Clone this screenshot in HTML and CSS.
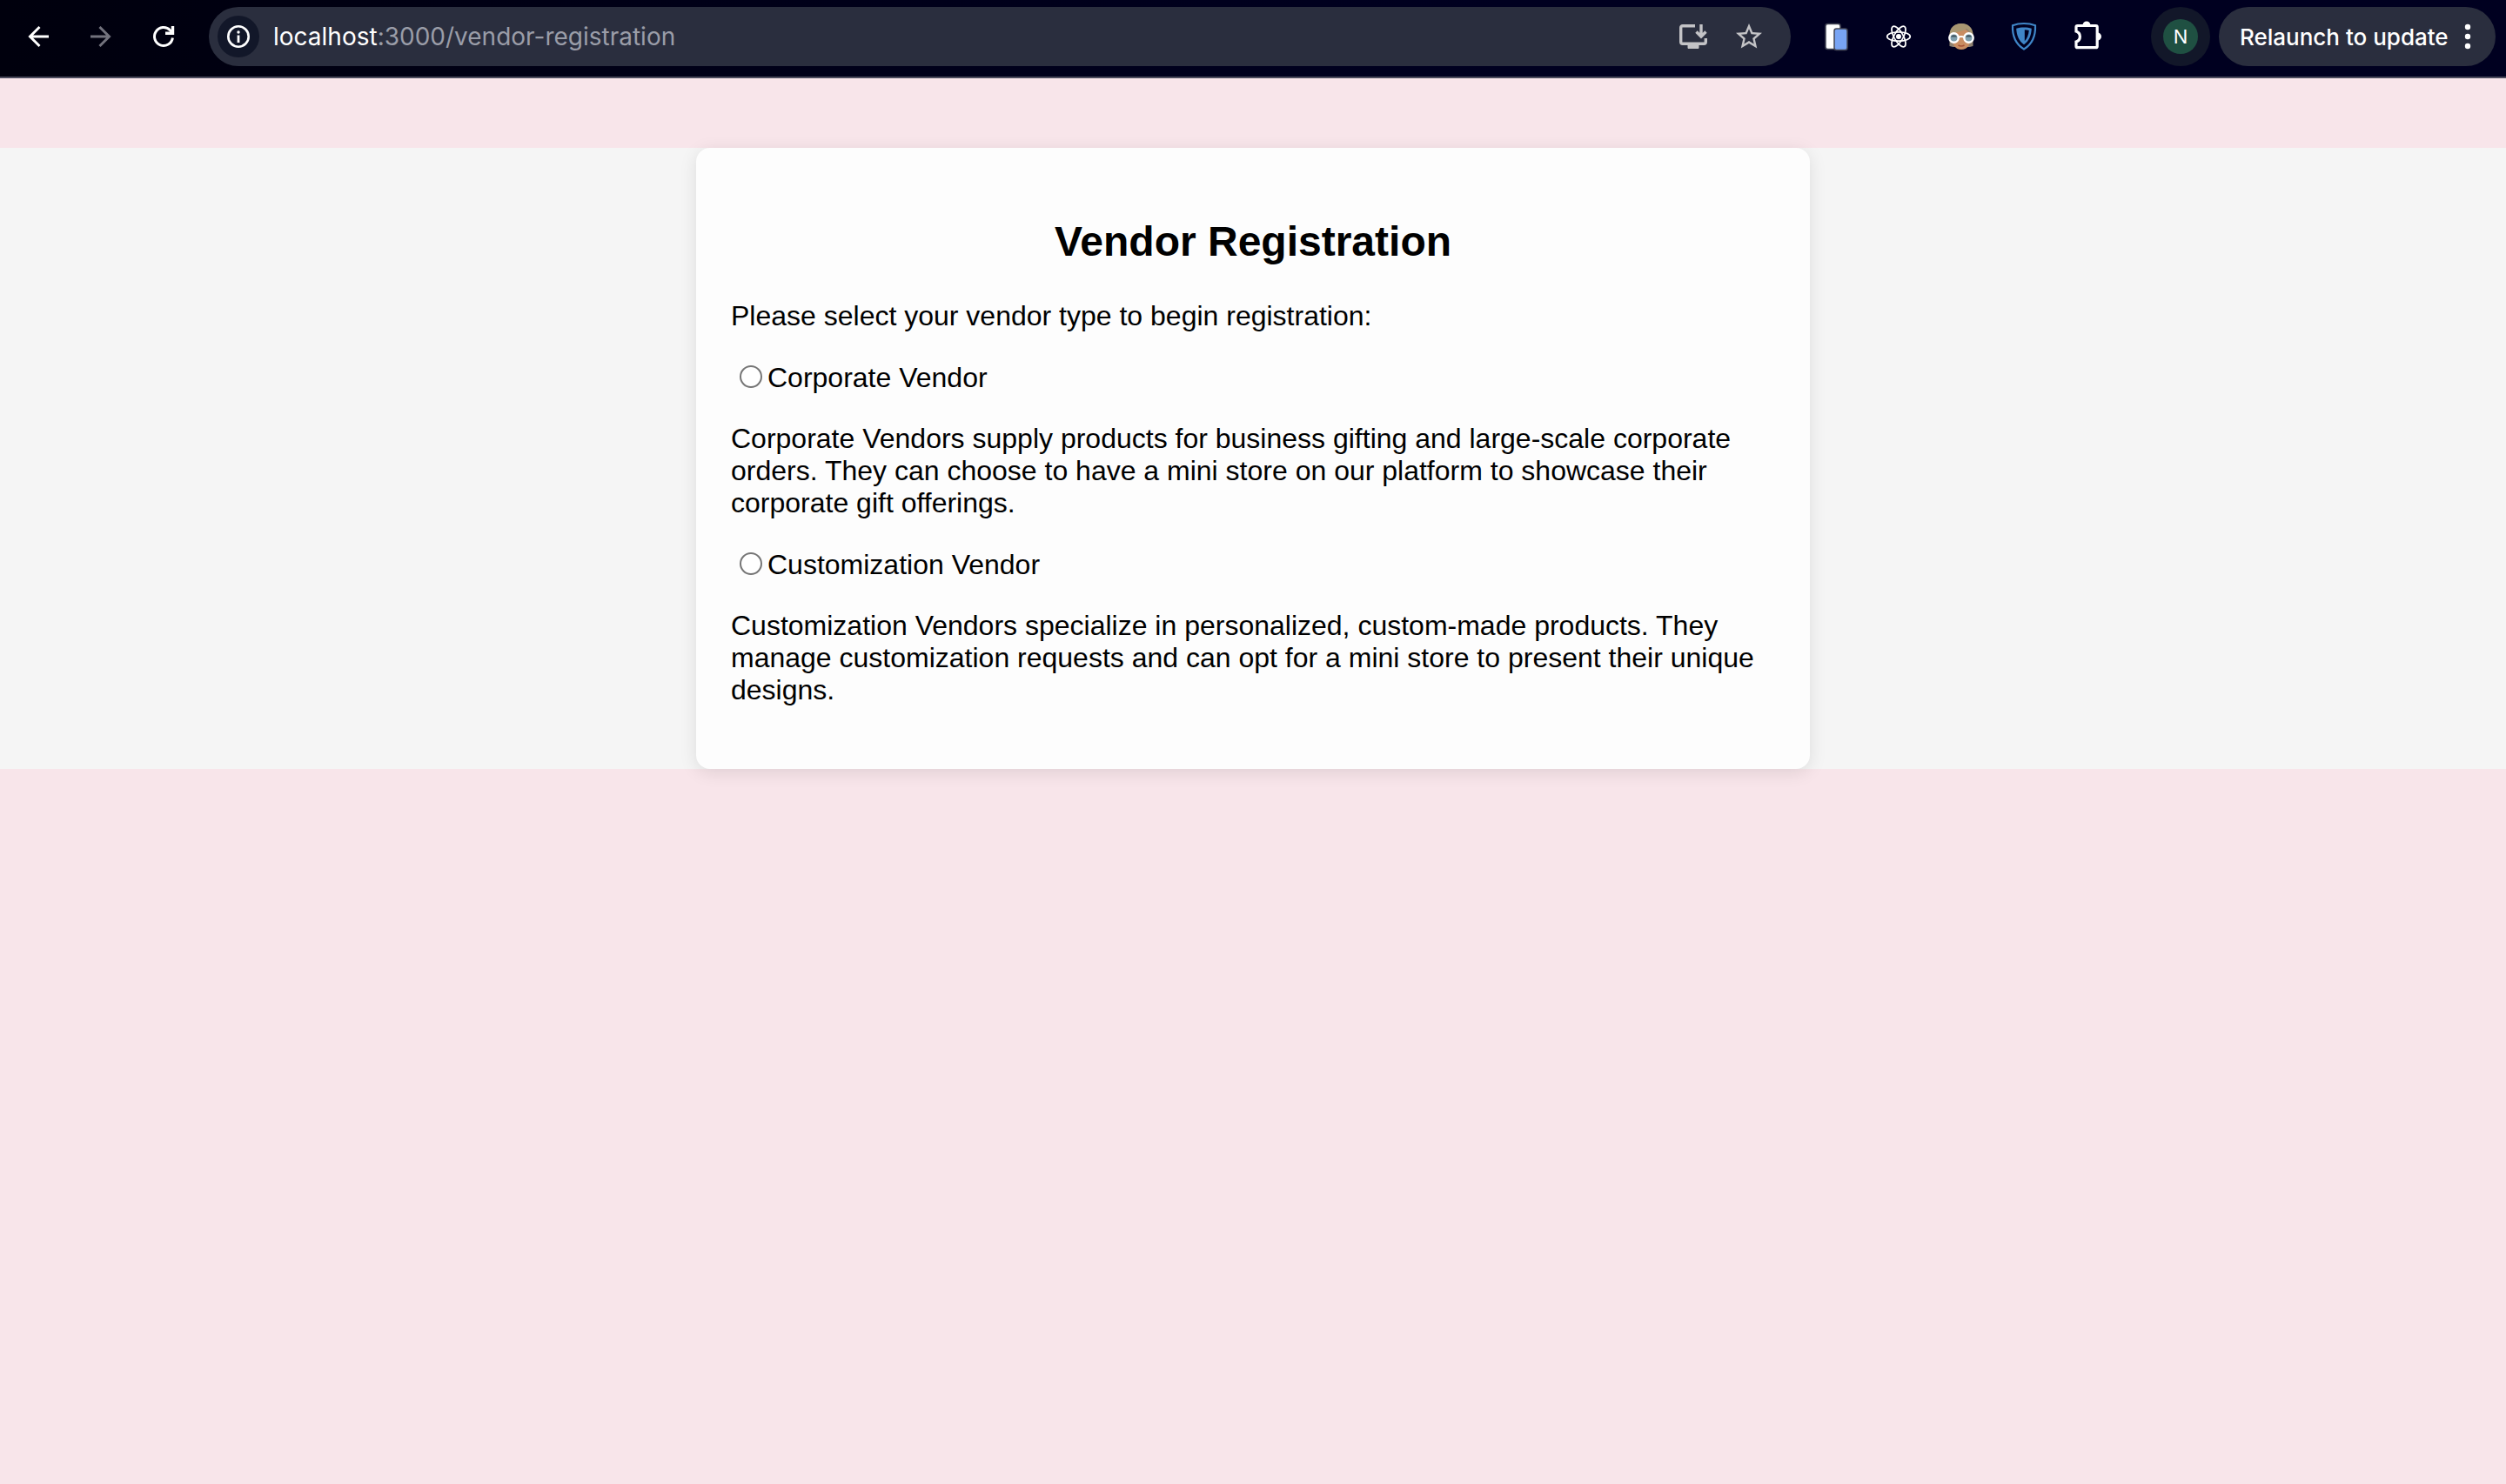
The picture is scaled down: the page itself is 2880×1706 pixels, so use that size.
FILE: index.html
```html
<!DOCTYPE html>
<html lang="en">
<head>
<meta charset="utf-8">
<meta name="viewport" content="width=device-width, initial-scale=1">
<title>Vendor Registration</title>
<link rel="stylesheet" href="styles.css">
</head>
<body>
<header class="toolbar">
  <nav class="toolbar-group" aria-label="History">
    <button class="tool" type="button" aria-label="Back">
      <svg class="icon line" viewBox="0 0 40 40"><path d="M32 20H11M21.500 9L10.500 20l11 11"/></svg>
    </button>
    <button class="tool" type="button" aria-label="Forward" disabled>
      <svg class="icon line" viewBox="0 0 40 40"><path d="M8 20h21M18.500 9l11 11-11 11"/></svg>
    </button>
    <button class="tool" type="button" aria-label="Reload">
      <svg class="icon line" viewBox="0 0 40 40"><path d="M30.400 21.500A10.500 10.500 0 1 1 27.500 12.700L30 15.500"/><path d="M30.500 8v8.300H22" stroke-width="3.400"/></svg>
    </button>
  </nav>

  <div class="address">
    <button class="site-info" type="button" aria-label="Site information">
      <svg class="icon" viewBox="0 0 40 40"><circle cx="20" cy="20" r="11.700" fill="none" stroke="currentColor" stroke-width="2.600"/><path d="M18.600 18.500h2.800V27h-2.800z"/><circle cx="20" cy="15" r="1.700"/></svg>
    </button>
    <div class="url" role="textbox" aria-label="Address" tabindex="0"><span class="url-host">localhost</span>:3000/vendor-registration</div>
    <button class="address-action" type="button" aria-label="Install app">
      <svg class="icon line" viewBox="0 0 40 40"><path d="M22 7.700H7.700a2 2 0 0 0-2 2V26.300a2 2 0 0 0 2 2H32.300a2 2 0 0 0 2-2V22" stroke-width="3.400"/><path d="M29 6v14M23.500 14.500l5.500 5.500 5.500-5.500" stroke-width="3.400"/><path d="M14 29h12v4.500H14z" fill="currentColor" stroke-width="1"/></svg>
    </button>
    <button class="address-action" type="button" aria-label="Bookmark this page">
      <svg class="icon star" viewBox="0 0 24 24"><path d="M22 9.240l-7.190-.620L12 2 9.190 8.630 2 9.240l5.460 4.730L5.820 21 12 17.270 18.180 21l-1.630-7.030L22 9.240zM12 15.400l-3.760 2.270 1-4.280-3.320-2.880 4.380-.380L12 6.100l1.710 4.040 4.380.380-3.320 2.880 1 4.280L12 15.400z"/></svg>
    </button>
  </div>

  <div class="toolbar-group">
    <button class="tool" type="button" aria-label="Responsive viewer">
      <svg class="icon" viewBox="0 0 40 40"><rect x="8" y="5.500" width="17" height="29" rx="2.500" fill="#fff" stroke="#444756" stroke-width="1.500"/><rect x="18" y="11" width="15" height="24.500" rx="2.500" fill="#78a4f4" stroke="#444756" stroke-width="1.500"/></svg>
    </button>
    <button class="tool" type="button" aria-label="React Developer Tools">
      <svg class="icon" viewBox="0 0 40 40"><g fill="none" stroke="currentColor" stroke-width="1.700"><ellipse cx="20" cy="20" rx="13.300" ry="5.200"/><ellipse cx="20" cy="20" rx="13.300" ry="5.200" transform="rotate(60 20 20)"/><ellipse cx="20" cy="20" rx="13.300" ry="5.200" transform="rotate(120 20 20)"/></g><circle cx="20" cy="20" r="3"/></svg>
    </button>
    <button class="tool" type="button" aria-label="Face extension">
      <svg class="icon" viewBox="0 0 40 40"><path d="M6.500 31V19C6.500 10 12 5 20 5s13.500 5 13.500 14v12l-4 1h-19z" fill="#8e8170"/><path d="M9 19C9 13 17 14 22 9c3 4 9 5 9 11 0 9-4 15-11 15S9 29 9 19z" fill="#c98d62"/><path d="M6.500 18C7 10 12 5 20 5c7 0 13 4 13.500 13C31 18 30 13 26 11 20 15 12 14 9 19z" fill="#a89772"/><g fill="#7f9fae" stroke="#fff" stroke-width="2.400"><circle cx="11.500" cy="21.500" r="5.200"/><circle cx="28.500" cy="21.500" r="5.200"/></g><path d="M7.900 20.500a4 4 0 0 1 7.200 0zM24.900 20.500a4 4 0 0 1 7.200 0z" fill="#40535d"/><path d="M16.500 21q3.500-2 7 0" fill="none" stroke="#fff" stroke-width="2"/><path d="M16.500 30q3.500 2 7 0" fill="none" stroke="#a45136" stroke-width="1.500"/></svg>
    </button>
    <button class="tool" type="button" aria-label="Shield extension">
      <svg class="icon" viewBox="0 0 40 40"><path d="M20 5c5 0 9 .700 13 2.200C33.500 19 29 29 20 34.500 11 29 6.500 19 7 7.200 11 5.700 15 5 20 5z" fill="none" stroke="#3f86c8" stroke-width="2.200"/><path d="M20 9.500c3.500 0 6 .400 8.800 1.300C28.500 18.500 26 25 20 29.300 14 25 11.500 18.500 11.200 10.800 14 9.900 16.500 9.500 20 9.500z" fill="#3f86c8"/><path d="M20.800 12.300c1.800 0 3.300.200 5 .700-.500 4.600-2 9-5 12.300z" fill="#000020"/></svg>
    </button>
    <button class="tool" type="button" aria-label="Extensions">
      <svg class="icon" viewBox="0 0 40 40"><path d="M9.500 7.500h21.200a1.500 1.500 0 0 1 1.500 1.500v22.200a1.500 1.500 0 0 1-1.500 1.500H9.500A1.500 1.500 0 0 1 8 31.200V26a6.300 6.300 0 0 0 0-12V9a1.500 1.500 0 0 1 1.500-1.500z" fill="none" stroke="currentColor" stroke-width="3.200"/><path d="M15.500 7a4.500 4.500 0 0 1 9 0zM32.500 15.500a4.500 4.500 0 0 1 0 9z"/></svg>
    </button>
  </div>

  <div class="account">
    <button class="profile" type="button" aria-label="Profile"><span class="avatar">N</span></button>
    <button class="relaunch" type="button">Relaunch to update
      <svg class="dots" viewBox="0 0 8 40"><circle cx="4" cy="9" r="3.200"/><circle cx="4" cy="20" r="3.200"/><circle cx="4" cy="31" r="3.200"/></svg>
    </button>
  </div>
</header>

<main class="page">
  <section class="band">
    <form class="card">
      <h2 class="title">Vendor Registration</h2>
      <p class="text">Please select your vendor type to begin registration:</p>
      <label class="option"><input class="radio" type="radio" name="vendorType" value="corporate">Corporate Vendor</label>
      <p class="text">Corporate Vendors supply products for business gifting and large-scale corporate orders. They can choose to have a mini store on our platform to showcase their corporate gift offerings.</p>
      <label class="option"><input class="radio" type="radio" name="vendorType" value="customization">Customization Vendor</label>
      <p class="text">Customization Vendors specialize in personalized, custom-made products. They manage customization requests and can opt for a mini store to present their unique designs.</p>
    </form>
  </section>
</main>
</body>
</html>
```

FILE: styles.css
```css
* {
  box-sizing: border-box;
}

body {
  margin: 0;
  min-height: 100vh;
  background: #f8e5ea;
  color: #000;
  font-family: "Liberation Sans", Arial, sans-serif;
  font-size: 32px;
  line-height: 37px;
}

button {
  margin: 0;
  padding: 0;
  border: 0;
  background: none;
  color: inherit;
  font: inherit;
}

/* Browser toolbar */
.toolbar {
  display: flex;
  align-items: center;
  padding: 8px 12px 12px 8px;
  border-bottom: 2px solid #4b4a5c;
  background: linear-gradient(90deg, #00000d, #000018 30%, #000020 60%);
  color: #fff;
  font-family: Inter, Roboto, sans-serif;
}

.toolbar-group {
  display: flex;
}

.tool {
  display: flex;
  align-items: center;
  justify-content: center;
  width: 72px;
  height: 68px;
}

.tool:disabled {
  color: #72727d;
}

.icon {
  display: block;
  width: 40px;
  height: 40px;
  fill: currentColor;
}

.line {
  fill: none;
  stroke: currentColor;
  stroke-width: 3;
}

.star {
  width: 36px;
  height: 36px;
}

.address {
  display: flex;
  flex: 1;
  align-items: center;
  height: 68px;
  margin: 0 16px;
  padding: 0 16px 0 10px;
  border-radius: 34px;
  background: #2a2e3e;
}

.site-info {
  display: flex;
  align-items: center;
  justify-content: center;
  width: 48px;
  height: 48px;
  border-radius: 50%;
  background: #121729;
}

.url {
  flex: 1;
  padding-left: 16px;
  color: #9a9da8;
  font-size: 28px;
  white-space: nowrap;
}

.url-host {
  color: #fff;
}

.address-action {
  display: flex;
  align-items: center;
  justify-content: center;
  width: 64px;
  height: 64px;
  color: #c3c3c6;
}

.account {
  display: flex;
  gap: 10px;
  margin-left: 38px;
}

.profile {
  display: flex;
  align-items: center;
  justify-content: center;
  width: 68px;
  height: 68px;
  border-radius: 50%;
  background: #121729;
}

.avatar {
  width: 40px;
  border-radius: 50%;
  background: #1f5042;
  font-size: 22px;
  line-height: 40px;
  text-align: center;
}

.relaunch {
  display: flex;
  align-items: center;
  justify-content: space-between;
  width: 318px;
  height: 68px;
  padding: 0 28px 0 24px;
  border-radius: 34px;
  background: #2a2e3e;
  font-size: 26px;
  font-weight: 500;
  white-space: nowrap;
}

.dots {
  width: 8px;
  height: 40px;
  fill: currentColor;
}

/* Registration page */
.page {
  padding-top: 80px;
}

.band {
  background: #f5f5f5;
}

.card {
  max-width: 1280px;
  margin: 0 auto;
  padding: 40px;
  border-radius: 16px;
  background: #fdfdfd;
  box-shadow: 0 4px 20px rgba(0, 0, 0, 0.1);
}

.title {
  margin: 40px 0;
  font-size: 48px;
  line-height: 55px;
  text-align: center;
}

.text {
  margin: 32px 0;
}

.option {
  display: flex;
  align-items: center;
  padding-top: 1px;
  line-height: 39px;
}

.radio {
  width: 26px;
  height: 26px;
  margin: 0 6px 3px 10px;
  border: 2px solid #767676;
  border-radius: 50%;
  background: #fff;
  appearance: none;
}

.radio:checked {
  border-color: #0075ff;
  background: radial-gradient(circle, #0075ff 50%, #fff 55%);
}
```
